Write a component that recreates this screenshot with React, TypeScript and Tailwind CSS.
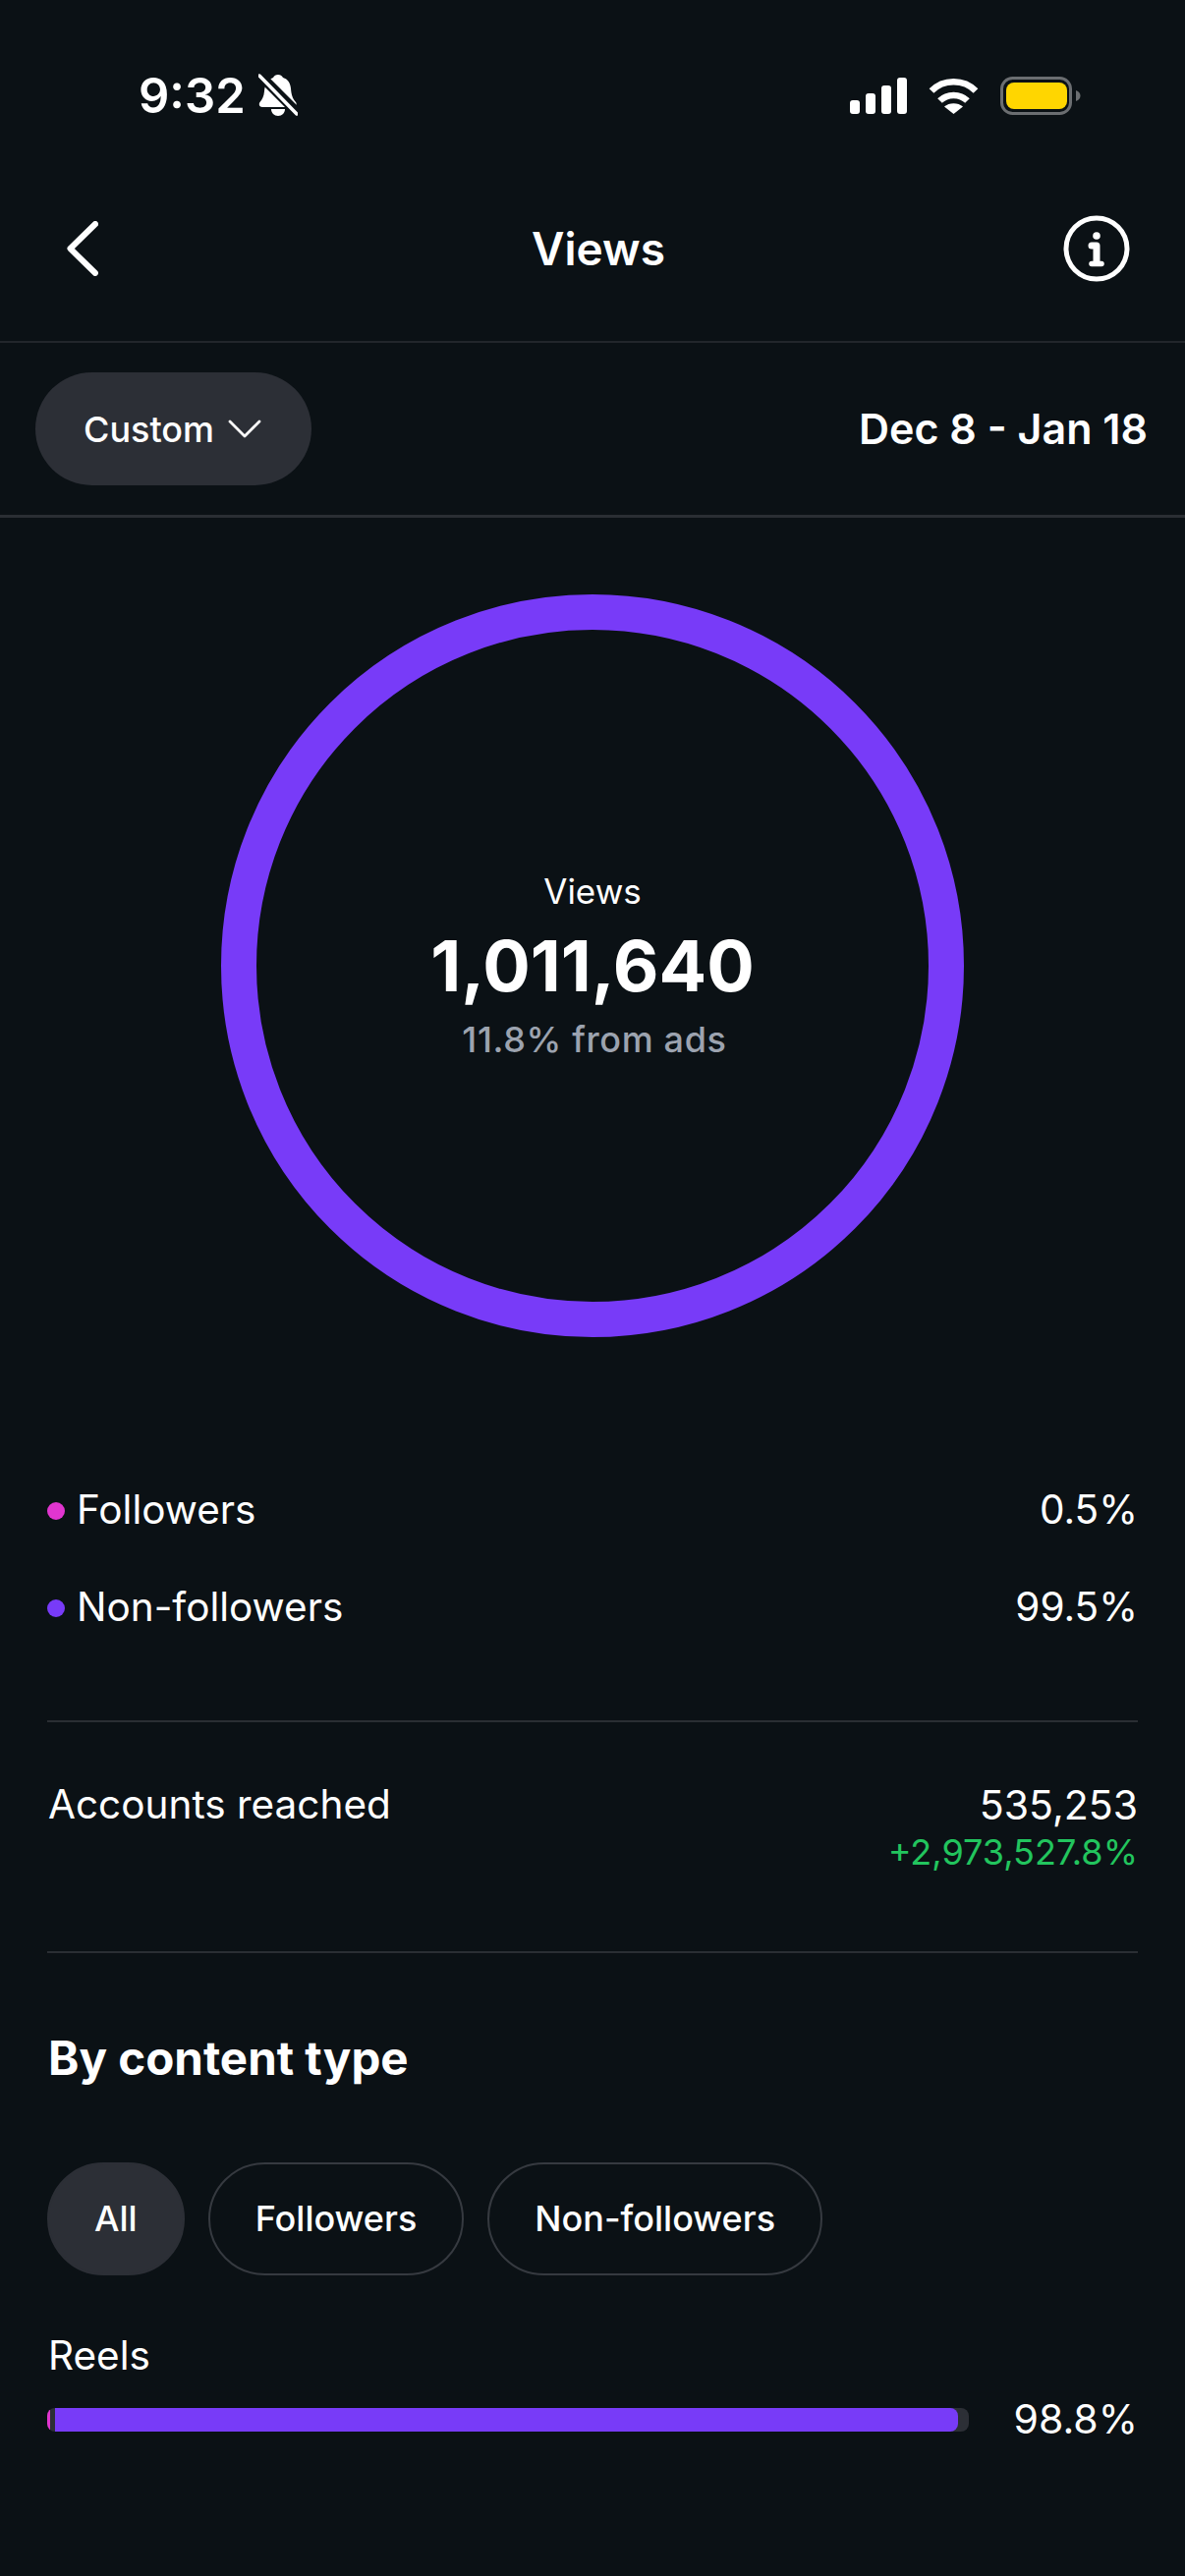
import React from "react";

function BellSlash() {
  return (
    <svg width="40" height="44" viewBox="0 0 40 44" className="ml-[13px] mt-[1px]">
      <path d="M20 1c2.200 0 4 1.200 5 3 5 1.500 7.500 5.500 8 11 .5 6 1.500 10 5 14 1.500 2 .5 5-2.500 5H4c-3 0-4-3-2.500-5 2.500-3 4-6 4.500-11 .5-7 3.500-12 9-14 1-2 2.700-3 5-3z" fill="#fff" />
      <path d="M13 36h14c0 4-3 7-7 7s-7-3-7-7z" fill="#fff" />
      <path d="M-1 -1L42 42" stroke="#0b1115" strokeWidth="10" />
      <path d="M1 2L39 41" stroke="#fff" strokeWidth="3.500" strokeLinecap="round" />
    </svg>
  );
}

function Signal() {
  return (
    <svg width="58" height="37" viewBox="0 0 58 37">
      <rect x="0" y="23" width="10" height="14" rx="3" fill="#fff" />
      <rect x="16" y="16" width="10" height="21" rx="3" fill="#fff" />
      <rect x="32" y="8" width="10" height="29" rx="3" fill="#fff" />
      <rect x="48" y="0" width="10" height="37" rx="3" fill="#fff" />
    </svg>
  );
}

function Wifi() {
  return (
    <svg width="51" height="37" viewBox="0 0 51 37">
      <path d="M3 13.500C15 1 36 1 48 13.500" stroke="#fff" strokeWidth="6.500" fill="none" />
      <path d="M11.500 23.500C19 16 32 16 39.500 23.500" stroke="#fff" strokeWidth="6.500" fill="none" />
      <path d="M25.500 37L16 29.500C21 25 30 25 35 29.500z" fill="#fff" />
    </svg>
  );
}

function Battery() {
  return (
    <svg width="82" height="39" viewBox="0 0 82 39">
      <rect x="1.500" y="1.500" width="70" height="36" rx="11" fill="none" stroke="#6b6e71" strokeWidth="3" />
      <rect x="6" y="6" width="62" height="27" rx="8" fill="#ffd600" />
      <path d="M77 14c3 1 4.500 3 4.500 5.500S80 24 77 25z" fill="#6b6e71" />
    </svg>
  );
}

function Back() {
  return (
    <svg width="32" height="56" viewBox="0 0 32 56">
      <path d="M29 3L3.500 28 29 53" stroke="#fff" strokeWidth="6" fill="none" strokeLinecap="round" strokeLinejoin="round" />
    </svg>
  );
}

function Info() {
  return (
    <svg width="68" height="68" viewBox="0 0 68 68">
      <circle cx="34" cy="34" r="31" stroke="#fff" strokeWidth="5" fill="none" />
      <circle cx="34" cy="21" r="3.800" fill="#fff" />
      <path d="M29 31h5v17" stroke="#fff" strokeWidth="7" fill="none" strokeLinejoin="round" strokeLinecap="round" />
      <path d="M29 49.500h10" stroke="#fff" strokeWidth="5.500" fill="none" strokeLinecap="round" />
    </svg>
  );
}

function Chevron() {
  return (
    <svg width="34" height="20" viewBox="0 0 34 20">
      <path d="M2 2l15 15L32 2" stroke="#fff" strokeWidth="2.800" fill="none" strokeLinecap="round" strokeLinejoin="round" />
    </svg>
  );
}

function Legend({ color, label, value }: { color: string; label: string; value: string }) {
  return (
    <div className="flex h-[99px] items-center justify-between">
      <div className="flex items-center gap-[12px]">
        <span className={`h-[18px] w-[18px] rounded-full ${color}`} />
        <span className="text-[40.500px] leading-none text-white">{label}</span>
      </div>
      <span className="text-[40.500px] leading-none text-white">{value}</span>
    </div>
  );
}

function Pill({ label, active }: { label: string; active?: boolean }) {
  return (
    <div
      className={
        active
          ? "flex h-[115px] items-center rounded-full border-2 border-[#2c2f36] bg-[#2c2f36] px-[46px] text-[36px] font-[550] text-white"
          : "flex h-[115px] items-center rounded-full border-2 border-[#363a40] px-[46px] text-[36px] font-[550] text-white"
      }
    >
      {label}
    </div>
  );
}

export default function App() {
  return (
    <div className="flex h-[2622px] w-[1206px] flex-col overflow-hidden bg-[#0b1115] font-[Inter] text-white">
      <div className="flex h-[174px] items-start justify-between pl-[141px] pr-[106px] pt-[74px]">
        <div className="flex items-start">
          <span className="text-[49px] font-semibold leading-[48px]">9:32</span>
          <BellSlash />
        </div>
        <div className="flex items-center gap-[22px] pt-[4px]">
          <Signal />
          <Wifi />
          <Battery />
        </div>
      </div>

      <div className="flex h-[175px] items-center border-b-2 border-[#22262b] px-[56px] pb-[16px]">
        <div className="flex flex-1 justify-start pl-[12px]">
          <Back />
        </div>
        <span className="text-[46px] font-semibold leading-none">Views</span>
        <div className="flex flex-1 justify-end">
          <Info />
        </div>
      </div>

      <div className="flex h-[178px] items-center justify-between border-b-[3px] border-[#2a2e33] pl-[36px] pr-[38px]">
        <div className="flex h-[115px] w-[281px] items-center gap-[14px] rounded-full bg-[#2c2f36] pl-[49px]">
          <span className="text-[36px] font-[550] leading-none">Custom</span>
          <Chevron />
        </div>
        <span className="text-[43px] font-semibold leading-none">Dec 8 - Jan 18</span>
      </div>

      <div className="flex justify-center pt-[78px]">
        <div className="flex h-[756px] w-[756px] flex-col items-center justify-center rounded-full border-[36px] border-[#783bf8]">
          <span className="text-[35px] leading-none">Views</span>
          <span className="mt-[22px] text-[72px] font-bold leading-none">1,011,640</span>
          <span className="mt-[21px] pl-[4px] text-[36px] font-[550] leading-none tracking-[0.650px] text-[#9ca3af]">11.8% from ads</span>
        </div>
      </div>

      <div className="flex flex-col px-[48px] pt-[127px]">
        <Legend color="bg-[#e135cf]" label="Followers" value="0.5%" />
        <Legend color="bg-[#783bf8]" label="Non-followers" value="99.5%" />

        <div className="mt-[65px] h-[2px] bg-[#2a2e33]" />

        <div className="flex h-[233px] items-start justify-between pt-[64px]">
          <span className="ml-[1px] text-[40.500px] leading-none">Accounts reached</span>
          <div className="flex flex-col items-end">
            <span className="text-[41px] leading-none">535,253</span>
            <span className="mt-[9px] text-[36px] leading-none text-[#22c55e]">+2,973,527.8%</span>
          </div>
        </div>

        <div className="h-[2px] bg-[#2a2e33]" />

        <div className="ml-[1px] pt-[83px] text-[47.500px] font-bold leading-none">By content type</div>

        <div className="mt-[82px] flex gap-[24px]">
          <Pill label="All" active />
          <Pill label="Followers" />
          <Pill label="Non-followers" />
        </div>

        <div className="ml-[1px] mt-[62px] text-[40.500px] leading-none">Reels</div>

        <div className="mt-[24px] flex items-center justify-between">
          <div className="flex h-[24px] w-[938px] items-stretch overflow-hidden rounded-[8px] bg-[#2c2f36]">
            <div className="w-[3px] bg-[#e135cf]" />
            <div className="ml-[5px] w-[919px] rounded-r-[8px] bg-[#783bf8]" />
          </div>
          <span className="text-[41px] leading-none">98.8%</span>
        </div>
      </div>
    </div>
  );
}
